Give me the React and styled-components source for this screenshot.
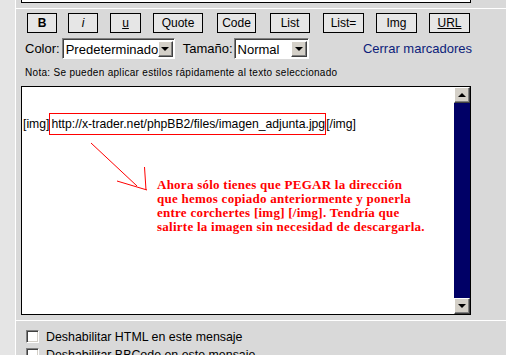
import styled, { createGlobalStyle } from "styled-components"

const Global = createGlobalStyle`
  html, body { margin: 0; padding: 0; background: #fff; }
  body { font-family: "Liberation Sans", Arial, sans-serif; color: #000; }
`

const Page = styled.div`
  display: flex;
  gap: 1px;
  width: 506px;
  height: 355px;
  overflow: hidden;
  background: #fff;
`

const Side = styled.div`
  width: 15px;
  flex-shrink: 0;
  background: #e5e5e5;
`

const Main = styled.div`
  flex: 1;
  display: flex;
  flex-direction: column;
  gap: 1px;
`

const TopRow = styled.div`
  height: 8px;
  flex-shrink: 0;
  background: #d9d9d9;
  padding-left: 5px;
`

const PrevBox = styled.div`
  width: 450px;
  height: 3px;
  box-sizing: border-box;
  background: #fff;
  border: 1px solid #000;
  border-top: none;
`

const Editor = styled.div`
  background: #d9d9d9;
  padding: 4px 0 5px 5px;
  display: flex;
  flex-direction: column;
  flex-shrink: 0;
`

const Toolbar = styled.div`
  display: grid;
  grid-template-columns: 41px 42px 43px 64px 53px 53px 53px 53px 40px;
  margin-left: 6px;
`

const Btn = styled.div`
  width: ${p => p.$w}px;
  height: 20px;
  box-sizing: border-box;
  border: 1px solid #000;
  background: #e6e6e6;
  display: flex;
  align-items: center;
  justify-content: center;
  font-size: 12px;
  font-weight: ${p => (p.$b ? 700 : 400)};
  font-style: ${p => (p.$i ? "italic" : "normal")};
  text-decoration: ${p => (p.$u ? "underline" : "none")};
`

const Controls = styled.div`
  display: flex;
  align-items: center;
  height: 21px;
  margin-top: 5px;
  padding-left: 4px;
  font-size: 13px;
`

const Label = styled.span`
  margin-left: ${p => p.$ml || 0}px;
`

const Select = styled.div`
  width: ${p => p.$w}px;
  height: 21px;
  margin-left: ${p => p.$ml || 0}px;
  box-sizing: border-box;
  background: #fff;
  border-top: 1px solid #808080;
  border-left: 1px solid #808080;
  border-right: 1px solid #fff;
  border-bottom: 1px solid #fff;
  box-shadow: inset 1px 1px 0 #404040;
  display: flex;
  align-items: center;
  padding: 1px 1px 0 3px;
  font-size: 13px;
`

const SelText = styled.span`
  flex: 1;
`

const ArrowBtn = styled.div`
  width: 16px;
  height: 16px;
  box-sizing: border-box;
  background: #d4d0c8;
  border-top: 1px solid #fff;
  border-left: 1px solid #fff;
  border-right: 1px solid #404040;
  border-bottom: 1px solid #404040;
  box-shadow: inset -1px -1px 0 #808080;
  display: flex;
  align-items: center;
  justify-content: center;
`

const Tri = styled.div`
  width: 0;
  height: 0;
  border-left: 4px solid transparent;
  border-right: 4px solid transparent;
  ${p => (p.$up ? "border-bottom: 4px solid #000;" : "border-top: 4px solid #000;")}
`

const CloseLink = styled.span`
  margin-left: auto;
  margin-right: 34px;
  color: #0c1d7a;
`

const Note = styled.div`
  margin-top: 8px;
  padding-left: 4px;
  font-size: 10px;
  line-height: 12px;
  letter-spacing: 0.3px;
`

const TextArea = styled.div`
  margin-top: 7px;
  width: 450px;
  height: 229px;
  box-sizing: border-box;
  border: 1px solid #000;
  background: #fff;
  display: flex;
`

const Content = styled.div`
  flex: 1;
  position: relative;
  padding: 30px 0 0 1px;
  font-size: 12.2px;
  line-height: 15px;
`

const Marked = styled.span`
  border: 1px solid #f00;
  padding: 3px 0 3px 1px;
`

const Arrow = styled.svg`
  position: absolute;
  left: 0;
  top: 0;
  width: 200px;
  height: 120px;
`

const Callout = styled.div`
  position: absolute;
  left: 135px;
  top: 91px;
  color: #f00;
  font-family: "Liberation Serif", "Times New Roman", serif;
  font-weight: 700;
  font-size: 13px;
  line-height: 14px;
  letter-spacing: 0.25px;
  white-space: nowrap;
`

const Scrollbar = styled.div`
  width: 16px;
  display: flex;
  flex-direction: column;
`

const Track = styled.div`
  flex: 1;
  background: #000066;
`

const Options = styled.div`
  flex: 1;
  background: #d9d9d9;
  padding: 9px 0 0 10px;
  font-size: 12.4px;
`

const Option = styled.div`
  display: flex;
  align-items: center;
  gap: 7px;
  height: 13px;
  margin-bottom: 5px;
`

const Check = styled.div`
  width: 13px;
  height: 13px;
  box-sizing: border-box;
  background: #fff;
  border-top: 1px solid #808080;
  border-left: 1px solid #808080;
  border-right: 1px solid #fff;
  border-bottom: 1px solid #fff;
  box-shadow: inset 1px 1px 0 #404040, inset -1px -1px 0 #d4d0c8;
`

const buttons = [
  { t: "B", w: 30, b: true },
  { t: "i", w: 30, i: true },
  { t: "u", w: 31, u: true },
  { t: "Quote", w: 50 },
  { t: "Code", w: 39 },
  { t: "List", w: 40 },
  { t: "List=", w: 41 },
  { t: "Img", w: 41 },
  { t: "URL", w: 41, u: true },
]

export default function App() {
  return (
    <>
      <Global />
      <Page>
        <Side />
        <Main>
          <TopRow>
            <PrevBox />
          </TopRow>
          <Editor>
            <Toolbar>
              {buttons.map(b => (
                <Btn key={b.t} $w={b.w} $b={b.b} $i={b.i} $u={b.u}>{b.t}</Btn>
              ))}
            </Toolbar>
            <Controls>
              <Label>Color:</Label>
              <Select $w={113} $ml={2}>
                <SelText>Predeterminado</SelText>
                <ArrowBtn><Tri /></ArrowBtn>
              </Select>
              <Label $ml={8}>Tamaño:</Label>
              <Select $w={75} $ml={1}>
                <SelText>Normal</SelText>
                <ArrowBtn><Tri /></ArrowBtn>
              </Select>
              <CloseLink>Cerrar marcadores</CloseLink>
            </Controls>
            <Note>Nota: Se pueden aplicar estilos rápidamente al texto seleccionado</Note>
            <TextArea>
              <Content>
                [img]<Marked>http://x-trader.net/phpBB2/files/imagen_adjunta.jpg</Marked>[/img]
                <Arrow viewBox="0 0 200 120">
                  <g stroke="#f00" strokeWidth="1" fill="none">
                    <line x1="69" y1="56" x2="115" y2="99" />
                    <line x1="95" y1="94" x2="125" y2="103" />
                    <line x1="122.5" y1="80" x2="124" y2="103" />
                  </g>
                </Arrow>
                <Callout>
                  Ahora sólo tienes que PEGAR la dirección<br />
                  que hemos copiado anteriormente y ponerla<br />
                  entre corchertes [img] [/img]. Tendría que<br />
                  salirte la imagen sin necesidad de descargarla.
                </Callout>
              </Content>
              <Scrollbar>
                <ArrowBtn><Tri $up /></ArrowBtn>
                <Track />
                <ArrowBtn><Tri /></ArrowBtn>
              </Scrollbar>
            </TextArea>
          </Editor>
          <Options>
            <Option><Check />Deshabilitar HTML en este mensaje</Option>
            <Option><Check />Deshabilitar BBCode en este mensaje</Option>
          </Options>
        </Main>
      </Page>
    </>
  )
}
